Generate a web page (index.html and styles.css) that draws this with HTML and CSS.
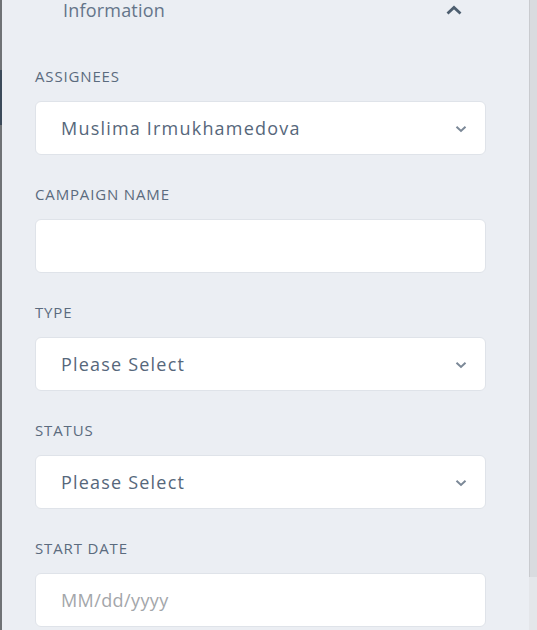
FILE: index.html
```html
<!DOCTYPE html>
<html>
<head>
<meta charset="utf-8">
<link rel="stylesheet" href="styles.css">
</head>
<body>
<div class="page">
  <div class="edge"><div class="edge-dark"></div></div>
  <div class="panel">
    <div class="section-head">
      <span class="section-title">Information</span>
      <svg class="chev-up" width="16" height="10" viewBox="0 0 16 10"><path d="M1.5 8.5 L8 2.5 L14.5 8.5" fill="none" stroke="#4d5e6f" stroke-width="2.8"/></svg>
    </div>
    <div class="field">
      <div class="label">ASSIGNEES</div>
      <div class="box select">
        <span class="value">Muslima Irmukhamedova</span>
        <svg class="chev-down" width="12" height="8" viewBox="0 0 12 8"><path d="M1.5 1.8 L6 6 L10.5 1.8" fill="none" stroke="#7b8897" stroke-width="2"/></svg>
      </div>
    </div>
    <div class="field">
      <div class="label">CAMPAIGN NAME</div>
      <div class="box"></div>
    </div>
    <div class="field">
      <div class="label">TYPE</div>
      <div class="box select">
        <span class="value">Please Select</span>
        <svg class="chev-down" width="12" height="8" viewBox="0 0 12 8"><path d="M1.5 1.8 L6 6 L10.5 1.8" fill="none" stroke="#7b8897" stroke-width="2"/></svg>
      </div>
    </div>
    <div class="field">
      <div class="label">STATUS</div>
      <div class="box select">
        <span class="value">Please Select</span>
        <svg class="chev-down" width="12" height="8" viewBox="0 0 12 8"><path d="M1.5 1.8 L6 6 L10.5 1.8" fill="none" stroke="#7b8897" stroke-width="2"/></svg>
      </div>
    </div>
    <div class="field">
      <div class="label">START DATE</div>
      <div class="box">
        <span class="placeholder">MM/dd/yyyy</span>
      </div>
    </div>
  </div>
  <div class="scrollbar"><div class="thumb"></div></div>
</div>
</body>
</html>
```

FILE: styles.css
```css
html, body {
  margin: 0;
  padding: 0;
  height: 100%;
  overflow: hidden;
  background: #ebeef3;
}
.page {
  display: flex;
  height: 630px;
  font-family: "Open Sans", "DejaVu Sans", sans-serif;
}
.edge {
  width: 2px;
  background: #6f7275;
  display: flex;
  flex-direction: column;
  padding-top: 70px;
  box-sizing: border-box;
}
.edge-dark {
  height: 55px;
  background: #3b4a5a;
}
.panel {
  flex: 1;
  padding: 0 43px 0 33px;
  display: flex;
  flex-direction: column;
  overflow: hidden;
}
.section-head {
  display: flex;
  align-items: center;
  justify-content: space-between;
  height: 20px;
  padding: 0 24px 0 28px;
  margin-bottom: 46px;
}
.section-title {
  font-size: 18px;
  line-height: 20px;
  color: #65758a;
  letter-spacing: 0.2px;
}
.chev-up {
  display: block;
  margin-top: -1px;
}
.field {
  display: flex;
  flex-direction: column;
  margin-bottom: 29px;
}
.label {
  font-size: 15px;
  line-height: 20px;
  color: #5b6b7e;
  letter-spacing: 0.85px;
  margin-bottom: 15px;
}
.box {
  height: 54px;
  box-sizing: border-box;
  background: #ffffff;
  border: 1px solid #dfe3e9;
  border-radius: 6px;
  display: flex;
  align-items: center;
  justify-content: space-between;
  padding: 0 18px 0 25px;
}
.value {
  font-size: 18px;
  color: #56677b;
  letter-spacing: 1.2px;
}
.placeholder {
  font-size: 18px;
  color: #a3a6aa;
  letter-spacing: 0.4px;
}
.chev-down {
  display: block;
  margin-top: 2px;
}
.scrollbar {
  width: 8px;
  display: flex;
  flex-direction: column;
  background: #e4e6ea;
}
.thumb {
  height: 577px;
  background: #d9dbdf;
  border-left: 1px solid #c9cbcf;
  box-sizing: border-box;
}
```
